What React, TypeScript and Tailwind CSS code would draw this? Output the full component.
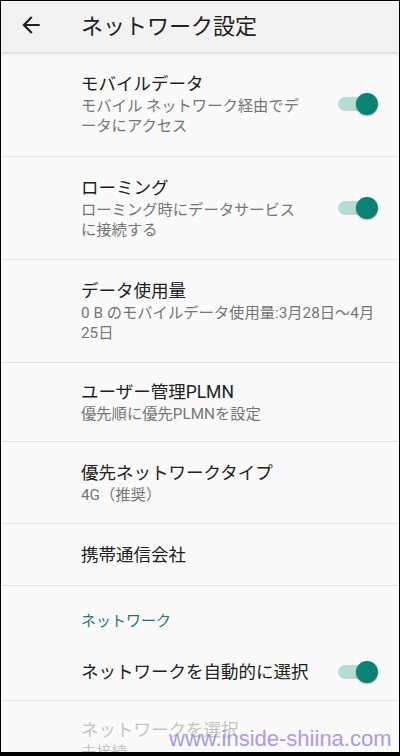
import React from "react";

const FONT = { fontFamily: 'Roboto, "Noto Sans CJK JP", sans-serif' };

function Toggle() {
  return (
    <div className="relative w-[40px] h-[24px] shrink-0">
      <div className="absolute left-0 top-[5px] w-[34px] h-[14px] rounded-full bg-[#b4dcd5]" />
      <div className="absolute right-0 top-[1px] w-[22px] h-[22px] rounded-full bg-[#0b8272] shadow-[0_1px_2px_rgba(0,0,0,0.3)]" />
    </div>
  );
}

function Row({
  title,
  sub,
  h,
  toggle,
}: {
  title: string;
  sub?: React.ReactNode;
  h: string;
  toggle?: boolean;
}) {
  return (
    <div className={`flex items-center pl-[80px] pr-[21px] border-b border-[#e3e3e3] ${h}`}>
      <div className="flex-1 min-w-0">
        <div className="text-[17.5px] leading-[24px] text-[#212121] whitespace-nowrap">{title}</div>
        {sub && <div className="text-[15.3px] leading-[20px] text-[#757575] whitespace-nowrap">{sub}</div>}
      </div>
      {toggle && (
        <div className="ml-auto">
          <Toggle />
        </div>
      )}
    </div>
  );
}

export default function App() {
  return (
    <div
      className="relative w-[400px] h-[756px] overflow-hidden bg-[#fafafa] border-l border-r border-t border-black border-b-4"
      style={FONT}
    >
      <div className="relative z-10 h-[51px] bg-[#f2f2f2] flex items-center shadow-[0_2px_3px_rgba(0,0,0,0.12)]">
        <svg className="absolute left-[17px] top-[11px]" width="26" height="26" viewBox="0 0 24 24">
          <path d="M20 11H7.83l5.59-5.59L12 4l-8 8 8 8 1.41-1.41L7.83 13H20v-2z" fill="#212121" />
        </svg>
        <div className="pl-[80px] text-[22px] leading-[28px] text-[#212121]">ネットワーク設定</div>
      </div>

      <Row
        h="h-[105px]"
        title="モバイルデータ"
        sub={
          <>
            モバイル ネットワーク経由でデ
            <br />
            ータにアクセス
          </>
        }
        toggle
      />
      <Row
        h="h-[103px]"
        title="ローミング"
        sub={
          <>
            ローミング時にデータサービス
            <br />
            に接続する
          </>
        }
        toggle
      />
      <Row
        h="h-[103px]"
        title="データ使用量"
        sub={
          <>
            0 B のモバイルデータ使用量:3月28日～4月
            <br />
            25日
          </>
        }
      />
      <Row h="h-[79px]" title="ユーザー管理PLMN" sub="優先順に優先PLMNを設定" />
      <Row h="h-[82px]" title="優先ネットワークタイプ" sub="4G（推奨）" />
      <Row h="h-[62px]" title="携帯通信会社" />

      <div className="h-[57px] pl-[80px] pt-[25px] text-[15px] leading-[20px] text-[#1a7a6c]">ネットワーク</div>

      <Row h="h-[58px]" title="ネットワークを自動的に選択" toggle />

      <div className="pl-[80px] pt-[17px]">
        <div className="text-[17.5px] leading-[24px] text-[#c4c4c4]">ネットワークを選択</div>
        <div className="text-[15.3px] leading-[20px] text-[#c4c4c4]">未接続</div>
      </div>

      <div
        className="absolute left-[168px] top-[727px] text-[22px] leading-[22px] text-[#a38fec] opacity-90 whitespace-nowrap"
        style={{ fontFamily: '"Liberation Sans", Arial, sans-serif' }}
      >
        www.inside-shiina.com
      </div>
    </div>
  );
}
